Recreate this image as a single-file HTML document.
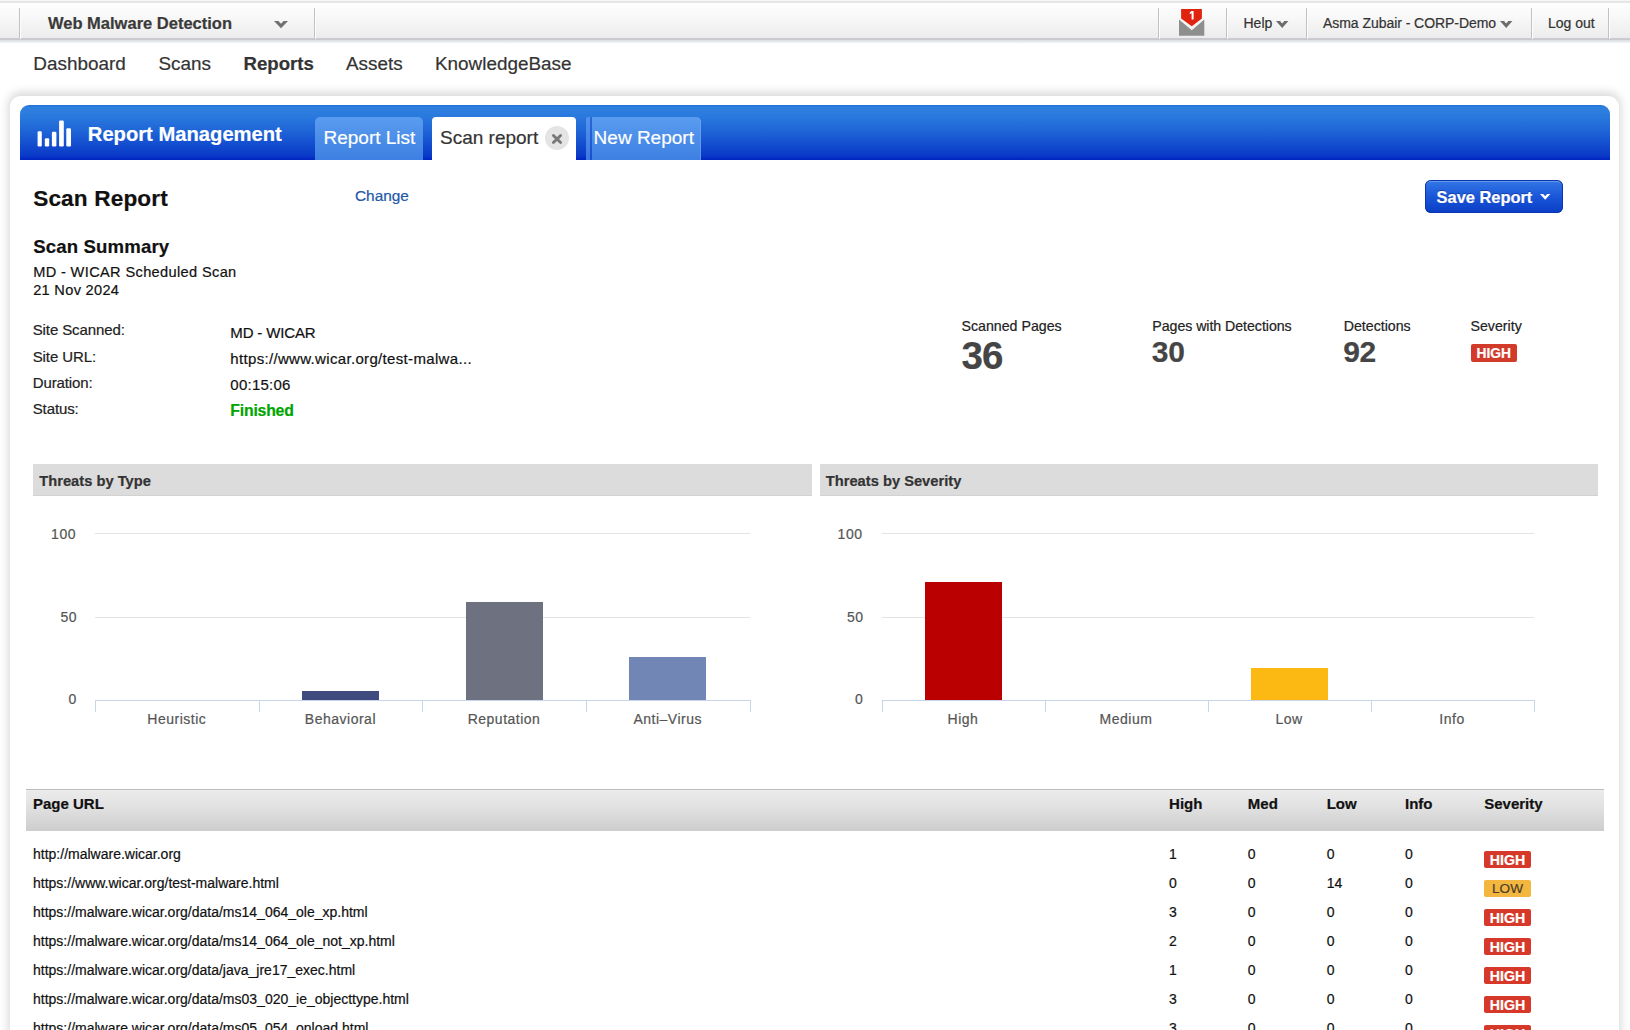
<!DOCTYPE html>
<html><head><meta charset="utf-8">
<style>
*{margin:0;padding:0;box-sizing:border-box}
html,body{width:1630px;height:1030px;overflow:hidden;background:#fff}
body{font-family:"Liberation Sans",sans-serif;color:#222;position:relative}
.a{position:absolute;white-space:nowrap;-webkit-text-stroke:0.2px currentColor}
</style></head><body>
<div class="a" style="left:0px;top:0px;width:1630px;height:1px;background:#f6f6f6"></div>
<div class="a" style="left:0px;top:1px;width:1630px;height:2px;background:#e6e6e6"></div>
<div class="a" style="left:0px;top:3px;width:1630px;height:35px;background:linear-gradient(#fefefe,#f9f9f9 35%,#ececec)"></div>
<div class="a" style="left:0px;top:38px;width:1630px;height:2px;background:#cbcbcf"></div>
<div class="a" style="left:0px;top:40px;width:1630px;height:3px;background:linear-gradient(#dadde2,#f3f4f6)"></div>
<div class="a" style="left:19px;top:8px;width:1px;height:31px;background:#c2c2c2"></div>
<div class="a" style="left:20px;top:8px;width:1px;height:31px;background:#fdfdfd"></div>
<div class="a" style="left:314px;top:8px;width:1px;height:31px;background:#c2c2c2"></div>
<div class="a" style="left:315px;top:8px;width:1px;height:31px;background:#fdfdfd"></div>
<div class="a" style="left:1158px;top:8px;width:1px;height:31px;background:#c2c2c2"></div>
<div class="a" style="left:1159px;top:8px;width:1px;height:31px;background:#fdfdfd"></div>
<div class="a" style="left:1226px;top:8px;width:1px;height:31px;background:#c2c2c2"></div>
<div class="a" style="left:1227px;top:8px;width:1px;height:31px;background:#fdfdfd"></div>
<div class="a" style="left:1306px;top:8px;width:1px;height:31px;background:#c2c2c2"></div>
<div class="a" style="left:1307px;top:8px;width:1px;height:31px;background:#fdfdfd"></div>
<div class="a" style="left:1531px;top:8px;width:1px;height:31px;background:#c2c2c2"></div>
<div class="a" style="left:1532px;top:8px;width:1px;height:31px;background:#fdfdfd"></div>
<div class="a" style="left:1608px;top:8px;width:1px;height:31px;background:#c2c2c2"></div>
<div class="a" style="left:1609px;top:8px;width:1px;height:31px;background:#fdfdfd"></div>
<div class="a" style="left:48.00px;top:15.00px;font-size:16.5px;line-height:16.5px;color:#3a3a3a;font-weight:bold;">Web Malware Detection</div>
<svg class="a" style="left:273.6px;top:20.8px;overflow:visible" width="14" height="7.2"><polygon points="0,0 4.3,0 7.0,2.78 9.7,0 14,0 7.0,7.2" fill="#707070"/></svg>
<svg class="a" style="left:1179px;top:8px" width="26" height="28" viewBox="0 0 26 28">
<path d="M0 11.6 L12.8 22.3 L25.3 11.6 L25.3 27.8 L0 27.8 Z" fill="#8e8e8e"/>
<path d="M2.1 0.9 L22.9 0.9 L22.9 10.5 L12.8 18.2 L2.1 10.5 Z" fill="#e0230f" stroke="#fff" stroke-width="0" />
<path d="M10.8 4.2 L12.6 2.9 L14.6 2.9 L14.6 11.6 L12.6 11.6 L12.6 5.3 L10.8 6.3 Z" fill="#fff"/>
</svg>
<div class="a" style="left:1243.50px;top:16.00px;font-size:14px;line-height:14px;color:#333;">Help</div>
<svg class="a" style="left:1276.1px;top:20.7px;overflow:visible" width="12.4" height="6.9"><polygon points="0,0 4.0,0 6.2,2.45 8.4,0 12.4,0 6.2,6.9" fill="#6c6c6c"/></svg>
<div class="a" style="left:1323.00px;top:16.00px;font-size:14px;line-height:14px;color:#333;letter-spacing:-0.05px;">Asma Zubair - CORP-Demo</div>
<svg class="a" style="left:1500.1px;top:20.7px;overflow:visible" width="12.4" height="6.9"><polygon points="0,0 4.0,0 6.2,2.45 8.4,0 12.4,0 6.2,6.9" fill="#6c6c6c"/></svg>
<div class="a" style="left:1548.00px;top:16.00px;font-size:14px;line-height:14px;color:#333;">Log out</div>
<div class="a" style="left:33.30px;top:55.00px;font-size:18.9px;line-height:18.9px;color:#333;">Dashboard</div>
<div class="a" style="left:158.40px;top:55.00px;font-size:18.9px;line-height:18.9px;color:#333;">Scans</div>
<div class="a" style="left:243.60px;top:55.00px;font-size:18.6px;line-height:18.6px;color:#333;font-weight:bold;">Reports</div>
<div class="a" style="left:346.00px;top:55.00px;font-size:18.9px;line-height:18.9px;color:#333;">Assets</div>
<div class="a" style="left:435.00px;top:55.00px;font-size:18.9px;line-height:18.9px;color:#333;">KnowledgeBase</div>
<div class="a" style="left:10px;top:96px;width:1609px;height:1000px;background:#fff;border-radius:11px;box-shadow:0 -2px 10px 2px rgba(0,0,0,0.15)"></div>
<div class="a" style="left:20px;top:105px;width:1590px;height:54.5px;border-radius:9px 9px 0 0;background:linear-gradient(#1f6fd8,#2e80de 4%,#2a7ade 20%,#1d62d6 50%,#0a3ac8 92%,#0022c0)"></div>
<svg class="a" style="left:37px;top:120px" width="36" height="28">
<rect x="0.6" y="11.3" width="4.2" height="15.1" rx="1.2" fill="#fff"/>
<rect x="7.8" y="18.3" width="4.4" height="8.1" rx="1.2" fill="#fff"/>
<rect x="14.9" y="11.7" width="4.5" height="14.7" rx="1.2" fill="#fff"/>
<rect x="22.1" y="0.6" width="4.7" height="25.8" rx="1.2" fill="#fff"/>
<rect x="29.3" y="8.2" width="4.7" height="18.2" rx="1.2" fill="#fff"/>
</svg>
<div class="a" style="left:87.80px;top:124.00px;font-size:20.2px;line-height:20.2px;color:#fff;font-weight:bold;">Report Management</div>
<div class="a" style="left:315px;top:117px;width:107.5px;height:43px;border-radius:5px 5px 0 0;background:linear-gradient(#5a9cf0,#3d80e2)"></div>
<div class="a" style="left:323.50px;top:128.00px;font-size:19px;line-height:19px;color:#fff;">Report List</div>
<div class="a" style="left:432px;top:117px;width:144px;height:43px;border-radius:4px 4px 0 0;background:#fff"></div>
<div class="a" style="left:440.00px;top:128.00px;font-size:19px;line-height:19px;color:#333;">Scan report</div>
<div class="a" style="left:545.2px;top:126px;width:24px;height:24px;border-radius:12px;background:#e4e4e4"></div>
<svg class="a" style="left:551px;top:133px" width="12" height="12"><path d="M2.4 2.4 L9.6 9.6 M9.6 2.4 L2.4 9.6" stroke="#777" stroke-width="2.8" stroke-linecap="round"/></svg>
<div class="a" style="left:585.8px;top:117px;width:5px;height:42.5px;border-radius:2px 0 0 0;background:linear-gradient(#5592ee,#3b7ce0)"></div>
<div class="a" style="left:590px;top:117px;width:1.6px;height:42.5px;background:linear-gradient(#2a6ad8,#1a4fd0)"></div>
<div class="a" style="left:591.5px;top:117px;width:109.5px;height:42.5px;border-radius:0 5px 0 0;background:linear-gradient(#5a9cf0,#3d80e2);box-shadow:inset -1px 0 0 rgba(120,170,250,0.5)"></div>
<div class="a" style="left:593.60px;top:128.00px;font-size:19px;line-height:19px;color:#fff;">New Report</div>
<div class="a" style="left:33.20px;top:188.00px;font-size:22.6px;line-height:22.6px;color:#111;font-weight:bold;letter-spacing:0.15px;">Scan Report</div>
<div class="a" style="left:355.00px;top:188.00px;font-size:15.4px;line-height:15.4px;color:#2357a8;">Change</div>
<div class="a" style="left:1425px;top:180px;width:138px;height:33px;border-radius:6px;background:linear-gradient(#3478e6,#1a56d8 50%,#0a3ec6);box-shadow:inset 0 0 0 1px #0a36b0, inset 0 2px 0 rgba(255,255,255,0.25)"></div>
<div class="a" style="left:1436.60px;top:189.00px;font-size:16.4px;line-height:16.4px;color:#fff;font-weight:bold;text-shadow:0 -1px 0 rgba(0,0,60,0.35);">Save Report</div>
<svg class="a" style="left:1540.3px;top:194.2px;overflow:visible" width="10.4" height="5.8"><polygon points="0,0 3.2,0 5.2,2.23 7.2,0 10.4,0 5.2,5.8" fill="#fff"/></svg>
<div class="a" style="left:33.20px;top:238.00px;font-size:18.6px;line-height:18.6px;color:#111;font-weight:bold;letter-spacing:0.15px;">Scan Summary</div>
<div class="a" style="left:33.20px;top:265.00px;font-size:14.6px;line-height:14.6px;color:#111;letter-spacing:0.35px;">MD - WICAR Scheduled Scan</div>
<div class="a" style="left:33.20px;top:283.00px;font-size:14.6px;line-height:14.6px;color:#111;letter-spacing:0.3px;">21 Nov 2024</div>
<div class="a" style="left:32.70px;top:322.00px;font-size:15px;line-height:15px;color:#222;letter-spacing:-0.1px;">Site Scanned:</div>
<div class="a" style="left:32.70px;top:349.00px;font-size:15px;line-height:15px;color:#222;letter-spacing:-0.1px;">Site URL:</div>
<div class="a" style="left:32.70px;top:375.00px;font-size:15px;line-height:15px;color:#222;letter-spacing:-0.1px;">Duration:</div>
<div class="a" style="left:32.70px;top:401.00px;font-size:15px;line-height:15px;color:#222;letter-spacing:-0.1px;">Status:</div>
<div class="a" style="left:230.30px;top:325.00px;font-size:15px;line-height:15px;color:#111;letter-spacing:-0.15px;">MD - WICAR</div>
<div class="a" style="left:230.30px;top:351.00px;font-size:15px;line-height:15px;color:#111;letter-spacing:0.33px;">https://www.wicar.org/test-malwa...</div>
<div class="a" style="left:230.30px;top:377.00px;font-size:15px;line-height:15px;color:#111;letter-spacing:0.25px;">00:15:06</div>
<div class="a" style="left:230.30px;top:403.00px;font-size:15.8px;line-height:15.8px;color:#00a500;font-weight:bold;letter-spacing:-0.2px;">Finished</div>
<div class="a" style="left:961.50px;top:319.00px;font-size:14.2px;line-height:14.2px;color:#222;">Scanned Pages</div>
<div class="a" style="left:1152.30px;top:319.00px;font-size:14.2px;line-height:14.2px;color:#222;letter-spacing:-0.05px;">Pages with Detections</div>
<div class="a" style="left:1343.70px;top:319.00px;font-size:14.2px;line-height:14.2px;color:#222;">Detections</div>
<div class="a" style="left:1470.50px;top:319.00px;font-size:14.2px;line-height:14.2px;color:#222;">Severity</div>
<div class="a" style="left:961.50px;top:337.00px;font-size:38.5px;line-height:38.5px;color:#454545;font-weight:bold;letter-spacing:-0.9px;">36</div>
<div class="a" style="left:1151.80px;top:337.00px;font-size:30px;line-height:30px;color:#454545;font-weight:bold;letter-spacing:-0.3px;">30</div>
<div class="a" style="left:1343.20px;top:337.00px;font-size:30px;line-height:30px;color:#454545;font-weight:bold;letter-spacing:-0.3px;">92</div>
<div class="a" style="left:1470.5px;top:344px;width:46.5px;height:17.5px;border-radius:2px;background:#d23a2a"></div>
<div class="a" style="left:1470.50px;top:347.00px;font-size:13.8px;line-height:13.8px;color:#fff;font-weight:bold;width:46.5px;text-align:center;">HIGH</div>
<div class="a" style="left:33px;top:464px;width:778.5px;height:31.5px;background:#dcdcdc;box-shadow:inset 0 -1px 0 #d2d2d2"></div>
<div class="a" style="left:39.30px;top:474.00px;font-size:14.7px;line-height:14.7px;color:#333;font-weight:bold;">Threats by Type</div>
<div class="a" style="left:95px;top:533px;width:654.5px;height:1.3px;background:#e3e3e3"></div>
<div class="a" style="left:95px;top:617px;width:654.5px;height:1.3px;background:#e3e3e3"></div>
<div class="a" style="left:51.00px;top:527.00px;font-size:14px;line-height:14px;color:#555;letter-spacing:0.6px;">100</div>
<div class="a" style="left:60.50px;top:610.00px;font-size:14px;line-height:14px;color:#555;letter-spacing:0.4px;">50</div>
<div class="a" style="left:68.50px;top:692.00px;font-size:14px;line-height:14px;color:#555;">0</div>
<div class="a" style="left:301.9px;top:690.5px;width:77px;height:9.5px;background:#3f4a7e"></div>
<div class="a" style="left:465.6px;top:601.6px;width:77px;height:98.4px;background:#6e717f"></div>
<div class="a" style="left:629.2px;top:657.0px;width:77px;height:43.0px;background:#7186b5"></div>
<div class="a" style="left:95px;top:699.5px;width:655.5px;height:1.3px;background:#c6d5e8"></div>
<div class="a" style="left:95.0px;top:700px;width:1.2px;height:11.5px;background:#c6d5e8"></div>
<div class="a" style="left:258.6px;top:700px;width:1.2px;height:11.5px;background:#c6d5e8"></div>
<div class="a" style="left:422.2px;top:700px;width:1.2px;height:11.5px;background:#c6d5e8"></div>
<div class="a" style="left:585.9px;top:700px;width:1.2px;height:11.5px;background:#c6d5e8"></div>
<div class="a" style="left:749.5px;top:700px;width:1.2px;height:11.5px;background:#c6d5e8"></div>
<div class="a" style="left:116.81px;top:712.00px;font-size:14px;line-height:14px;color:#555;letter-spacing:0.5px;width:120px;text-align:center;">Heuristic</div>
<div class="a" style="left:280.44px;top:712.00px;font-size:14px;line-height:14px;color:#555;letter-spacing:0.5px;width:120px;text-align:center;">Behavioral</div>
<div class="a" style="left:444.06px;top:712.00px;font-size:14px;line-height:14px;color:#555;letter-spacing:0.5px;width:120px;text-align:center;">Reputation</div>
<div class="a" style="left:607.69px;top:712.00px;font-size:14px;line-height:14px;color:#555;letter-spacing:0.5px;width:120px;text-align:center;">Anti&#8211;Virus</div>
<div class="a" style="left:819.5px;top:464px;width:778.5px;height:31.5px;background:#dcdcdc;box-shadow:inset 0 -1px 0 #d2d2d2"></div>
<div class="a" style="left:825.80px;top:474.00px;font-size:14.7px;line-height:14.7px;color:#333;font-weight:bold;">Threats by Severity</div>
<div class="a" style="left:881.5px;top:533px;width:652.0px;height:1.3px;background:#e3e3e3"></div>
<div class="a" style="left:881.5px;top:617px;width:652.0px;height:1.3px;background:#e3e3e3"></div>
<div class="a" style="left:837.50px;top:527.00px;font-size:14px;line-height:14px;color:#555;letter-spacing:0.6px;">100</div>
<div class="a" style="left:847.00px;top:610.00px;font-size:14px;line-height:14px;color:#555;letter-spacing:0.4px;">50</div>
<div class="a" style="left:855.00px;top:692.00px;font-size:14px;line-height:14px;color:#555;">0</div>
<div class="a" style="left:924.5px;top:581.5px;width:77px;height:118.5px;background:#ba0000"></div>
<div class="a" style="left:1250.5px;top:667.5px;width:77px;height:32.5px;background:#fdb913"></div>
<div class="a" style="left:881.5px;top:699.5px;width:653.0px;height:1.3px;background:#c6d5e8"></div>
<div class="a" style="left:881.5px;top:700px;width:1.2px;height:11.5px;background:#c6d5e8"></div>
<div class="a" style="left:1044.5px;top:700px;width:1.2px;height:11.5px;background:#c6d5e8"></div>
<div class="a" style="left:1207.5px;top:700px;width:1.2px;height:11.5px;background:#c6d5e8"></div>
<div class="a" style="left:1370.5px;top:700px;width:1.2px;height:11.5px;background:#c6d5e8"></div>
<div class="a" style="left:1533.5px;top:700px;width:1.2px;height:11.5px;background:#c6d5e8"></div>
<div class="a" style="left:903.00px;top:712.00px;font-size:14px;line-height:14px;color:#555;letter-spacing:0.5px;width:120px;text-align:center;">High</div>
<div class="a" style="left:1066.00px;top:712.00px;font-size:14px;line-height:14px;color:#555;letter-spacing:0.5px;width:120px;text-align:center;">Medium</div>
<div class="a" style="left:1229.00px;top:712.00px;font-size:14px;line-height:14px;color:#555;letter-spacing:0.5px;width:120px;text-align:center;">Low</div>
<div class="a" style="left:1392.00px;top:712.00px;font-size:14px;line-height:14px;color:#555;letter-spacing:0.5px;width:120px;text-align:center;">Info</div>
<div class="a" style="left:26px;top:789px;width:1577.5px;height:41.5px;background:linear-gradient(#ececec,#e2e2e2 40%,#cdcdcd);box-shadow:inset 0 1px 0 #bdbdbd"></div>
<div class="a" style="left:33.00px;top:796.00px;font-size:15px;line-height:15px;color:#111;font-weight:bold;">Page URL</div>
<div class="a" style="left:1169.10px;top:796.00px;font-size:15px;line-height:15px;color:#111;font-weight:bold;">High</div>
<div class="a" style="left:1247.80px;top:796.00px;font-size:15px;line-height:15px;color:#111;font-weight:bold;">Med</div>
<div class="a" style="left:1326.70px;top:796.00px;font-size:15px;line-height:15px;color:#111;font-weight:bold;">Low</div>
<div class="a" style="left:1405.00px;top:796.00px;font-size:15px;line-height:15px;color:#111;font-weight:bold;">Info</div>
<div class="a" style="left:1484.20px;top:796.00px;font-size:15px;line-height:15px;color:#111;font-weight:bold;">Severity</div>
<div class="a" style="left:33.00px;top:847.00px;font-size:14px;line-height:14px;color:#111;">http://malware.wicar.org</div>
<div class="a" style="left:1169.10px;top:847.00px;font-size:14px;line-height:14px;color:#111;">1</div>
<div class="a" style="left:1247.80px;top:847.00px;font-size:14px;line-height:14px;color:#111;">0</div>
<div class="a" style="left:1326.70px;top:847.00px;font-size:14px;line-height:14px;color:#111;">0</div>
<div class="a" style="left:1405.00px;top:847.00px;font-size:14px;line-height:14px;color:#111;">0</div>
<div class="a" style="left:1484.3px;top:851.1px;width:46.5px;height:17px;border-radius:2px;background:#d6382a"></div>
<div class="a" style="left:1484.30px;top:853.00px;font-size:14.2px;line-height:14.2px;color:#fff;font-weight:bold;width:46.5px;text-align:center;">HIGH</div>
<div class="a" style="left:33.00px;top:876.00px;font-size:14px;line-height:14px;color:#111;">https://www.wicar.org/test-malware.html</div>
<div class="a" style="left:1169.10px;top:876.00px;font-size:14px;line-height:14px;color:#111;">0</div>
<div class="a" style="left:1247.80px;top:876.00px;font-size:14px;line-height:14px;color:#111;">0</div>
<div class="a" style="left:1326.70px;top:876.00px;font-size:14px;line-height:14px;color:#111;">14</div>
<div class="a" style="left:1405.00px;top:876.00px;font-size:14px;line-height:14px;color:#111;">0</div>
<div class="a" style="left:1484.3px;top:880.1px;width:46.5px;height:16.5px;border-radius:2px;background:#f3b63f"></div>
<div class="a" style="left:1484.30px;top:882.00px;font-size:13.6px;line-height:13.6px;color:#4a3f2a;width:46.5px;text-align:center;">LOW</div>
<div class="a" style="left:33.00px;top:905.00px;font-size:14px;line-height:14px;color:#111;">https://malware.wicar.org/data/ms14_064_ole_xp.html</div>
<div class="a" style="left:1169.10px;top:905.00px;font-size:14px;line-height:14px;color:#111;">3</div>
<div class="a" style="left:1247.80px;top:905.00px;font-size:14px;line-height:14px;color:#111;">0</div>
<div class="a" style="left:1326.70px;top:905.00px;font-size:14px;line-height:14px;color:#111;">0</div>
<div class="a" style="left:1405.00px;top:905.00px;font-size:14px;line-height:14px;color:#111;">0</div>
<div class="a" style="left:1484.3px;top:909.0px;width:46.5px;height:17px;border-radius:2px;background:#d6382a"></div>
<div class="a" style="left:1484.30px;top:911.00px;font-size:14.2px;line-height:14.2px;color:#fff;font-weight:bold;width:46.5px;text-align:center;">HIGH</div>
<div class="a" style="left:33.00px;top:934.00px;font-size:14px;line-height:14px;color:#111;">https://malware.wicar.org/data/ms14_064_ole_not_xp.html</div>
<div class="a" style="left:1169.10px;top:934.00px;font-size:14px;line-height:14px;color:#111;">2</div>
<div class="a" style="left:1247.80px;top:934.00px;font-size:14px;line-height:14px;color:#111;">0</div>
<div class="a" style="left:1326.70px;top:934.00px;font-size:14px;line-height:14px;color:#111;">0</div>
<div class="a" style="left:1405.00px;top:934.00px;font-size:14px;line-height:14px;color:#111;">0</div>
<div class="a" style="left:1484.3px;top:938.0px;width:46.5px;height:17px;border-radius:2px;background:#d6382a"></div>
<div class="a" style="left:1484.30px;top:940.00px;font-size:14.2px;line-height:14.2px;color:#fff;font-weight:bold;width:46.5px;text-align:center;">HIGH</div>
<div class="a" style="left:33.00px;top:963.00px;font-size:14px;line-height:14px;color:#111;">https://malware.wicar.org/data/java_jre17_exec.html</div>
<div class="a" style="left:1169.10px;top:963.00px;font-size:14px;line-height:14px;color:#111;">1</div>
<div class="a" style="left:1247.80px;top:963.00px;font-size:14px;line-height:14px;color:#111;">0</div>
<div class="a" style="left:1326.70px;top:963.00px;font-size:14px;line-height:14px;color:#111;">0</div>
<div class="a" style="left:1405.00px;top:963.00px;font-size:14px;line-height:14px;color:#111;">0</div>
<div class="a" style="left:1484.3px;top:966.9px;width:46.5px;height:17px;border-radius:2px;background:#d6382a"></div>
<div class="a" style="left:1484.30px;top:969.00px;font-size:14.2px;line-height:14.2px;color:#fff;font-weight:bold;width:46.5px;text-align:center;">HIGH</div>
<div class="a" style="left:33.00px;top:992.00px;font-size:14px;line-height:14px;color:#111;">https://malware.wicar.org/data/ms03_020_ie_objecttype.html</div>
<div class="a" style="left:1169.10px;top:992.00px;font-size:14px;line-height:14px;color:#111;">3</div>
<div class="a" style="left:1247.80px;top:992.00px;font-size:14px;line-height:14px;color:#111;">0</div>
<div class="a" style="left:1326.70px;top:992.00px;font-size:14px;line-height:14px;color:#111;">0</div>
<div class="a" style="left:1405.00px;top:992.00px;font-size:14px;line-height:14px;color:#111;">0</div>
<div class="a" style="left:1484.3px;top:995.9px;width:46.5px;height:17px;border-radius:2px;background:#d6382a"></div>
<div class="a" style="left:1484.30px;top:998.00px;font-size:14.2px;line-height:14.2px;color:#fff;font-weight:bold;width:46.5px;text-align:center;">HIGH</div>
<div class="a" style="left:33.00px;top:1021.00px;font-size:14px;line-height:14px;color:#111;">https://malware.wicar.org/data/ms05_054_onload.html</div>
<div class="a" style="left:1169.10px;top:1021.00px;font-size:14px;line-height:14px;color:#111;">3</div>
<div class="a" style="left:1247.80px;top:1021.00px;font-size:14px;line-height:14px;color:#111;">0</div>
<div class="a" style="left:1326.70px;top:1021.00px;font-size:14px;line-height:14px;color:#111;">0</div>
<div class="a" style="left:1405.00px;top:1021.00px;font-size:14px;line-height:14px;color:#111;">0</div>
<div class="a" style="left:1484.3px;top:1024.8px;width:46.5px;height:17px;border-radius:2px;background:#d6382a"></div>
<div class="a" style="left:1484.30px;top:1027.00px;font-size:14.2px;line-height:14.2px;color:#fff;font-weight:bold;width:46.5px;text-align:center;">HIGH</div>
</body></html>
